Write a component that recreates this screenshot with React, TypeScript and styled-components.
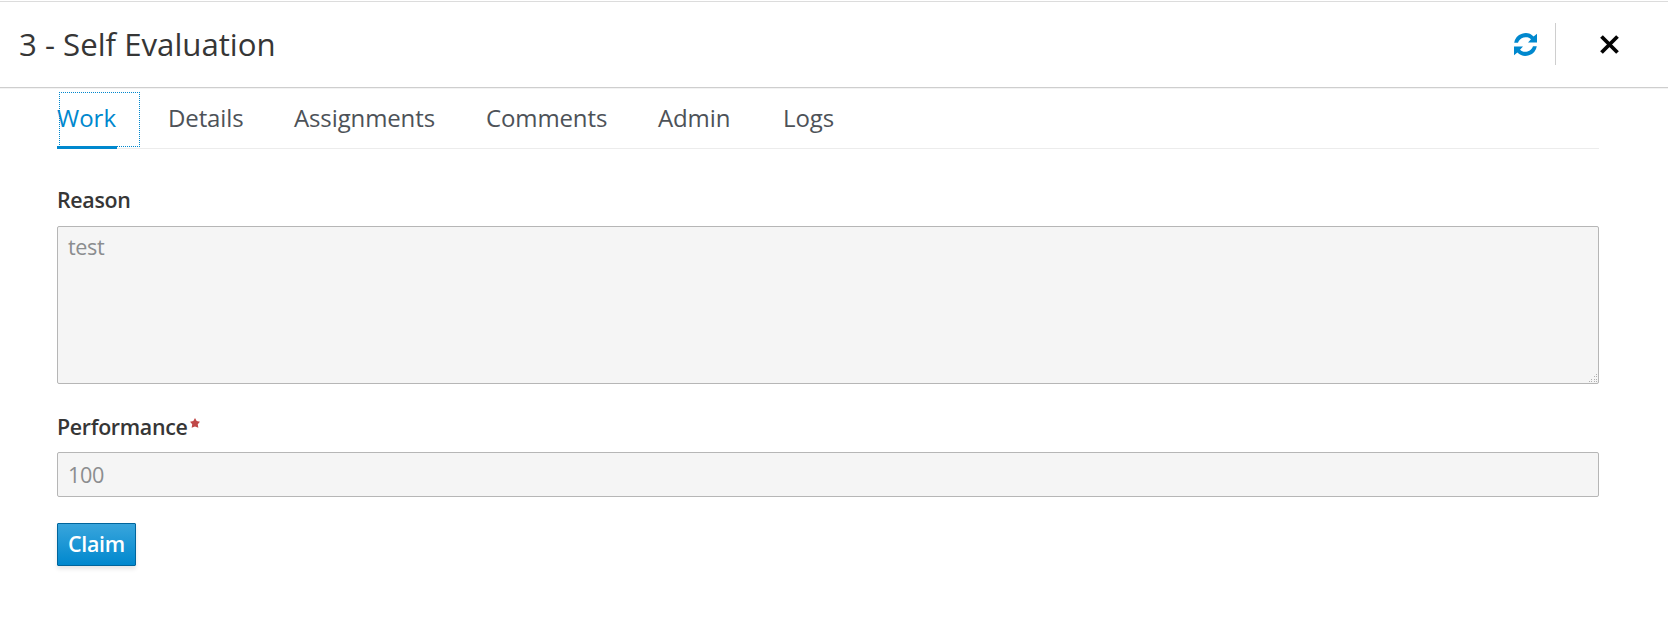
import React from "react";
import styled, { createGlobalStyle } from "styled-components";

const GlobalStyle = createGlobalStyle`
  * { box-sizing: border-box; }
  body {
    margin: 0;
    background: #fff;
    color: #363636;
    font-family: "Open Sans", "Liberation Sans", sans-serif;
  }
`;

const Page = styled.div`
  min-height: 622px;
  padding-top: 1px;
`;

const Header = styled.header`
  display: flex;
  align-items: center;
  height: 87px;
  padding: 0 49px 0 19px;
  border-top: 1px solid #dcdcdc;
  border-bottom: 1px solid #cecece;
  box-shadow: 0 1px 0 #f3f3f3;
`;

const Title = styled.h1`
  flex: 1;
  margin: -2px 0 0;
  font-size: 31.2px;
  line-height: 40px;
  font-weight: 400;
  white-space: nowrap;
`;

const IconButton = styled.button`
  display: flex;
  padding: 0;
  border: 0;
  background: none;
`;

const Divider = styled.span`
  width: 1px;
  height: 42px;
  margin: -2px 44px 0 18px;
  background: #cecece;
`;

const Content = styled.main`
  padding: 3px 69px 0 57px;
`;

const Tabs = styled.nav`
  display: flex;
  height: 58px;
  border-bottom: 1px solid #ececec;
`;

const Tab = styled.a<{ $width: number; $active?: boolean }>`
  position: relative;
  width: ${(p) => p.$width}px;
  font-size: 24px;
  line-height: 54px;
  letter-spacing: ${(p) => (p.$active ? "0" : "-0.12px")};
  color: ${(p) => (p.$active ? "#0088ce" : "#4d5258")};
  white-space: nowrap;
`;

const FocusRing = styled.span`
  position: absolute;
  top: 1px;
  left: 2px;
  width: 81px;
  height: 55px;
  border: 1px dotted #0088ce;
`;

const ActiveBar = styled.span`
  position: absolute;
  left: 0;
  bottom: -1px;
  width: 60px;
  height: 3px;
  background: #0088ce;
`;

const Label = styled.label<{ $top: number }>`
  display: flex;
  margin-top: ${(p) => p.$top}px;
  height: 30px;
  font-size: 21.4px;
  line-height: 30px;
  letter-spacing: -0.33px;
  font-weight: 600;
`;

const Star = styled.svg`
  margin: 6px 0 0 3px;
`;

const TextAreaWrap = styled.div`
  position: relative;
  margin-top: 11px;
`;

const TextArea = styled.textarea`
  display: block;
  width: 100%;
  height: 158px;
  padding: 5px 10px;
  border: 1px solid #b6b6b6;
  border-radius: 2px;
  background: #f5f5f5;
  color: #8b8d8f;
  font: 400 21.6px/30px "Open Sans", "Liberation Sans", sans-serif;
  letter-spacing: -0.4px;
  resize: none;
`;

const Grip = styled.svg`
  position: absolute;
  right: 1px;
  bottom: 1px;
`;

const Input = styled.input`
  display: block;
  width: 100%;
  height: 45px;
  margin-top: 10px;
  padding: 0 10px 1px;
  border: 1px solid #b6b6b6;
  border-radius: 2px;
  background: #f5f5f5;
  color: #8b8d8f;
  font: 400 21.6px/30px "Open Sans", "Liberation Sans", sans-serif;
  letter-spacing: -0.4px;
`;

const ClaimButton = styled.button`
  display: block;
  width: 79px;
  height: 43px;
  margin-top: 26px;
  padding: 0 0 2px;
  border: 1px solid #00659c;
  border-radius: 1px;
  background: linear-gradient(#39a5dc, #0088ce);
  box-shadow: 0 3px 4px rgba(3, 3, 3, 0.1);
  color: #fff;
  font: 600 21.4px/38px "Open Sans", "Liberation Sans", sans-serif;
  letter-spacing: -0.3px;
`;

const tabs = [
  { label: "Work", width: 111 },
  { label: "Details", width: 126 },
  { label: "Assignments", width: 192 },
  { label: "Comments", width: 172 },
  { label: "Admin", width: 125 },
  { label: "Logs", width: 60 },
];

const gripDots = [
  [7, 0],
  [5, 2], [7, 2],
  [2, 5], [5, 5], [7, 5],
  [0, 7], [2, 7], [5, 7], [7, 7],
];

const arrow =
  "M.2 9.800A11.500 11.500 0 0 1 19.600 3.500L23 .8V9.500H14L17 6.200A8 8 0 0 0 4 9.800Z";

export default function App() {
  return (
    <Page>
      <GlobalStyle />
      <Header>
        <Title>3 - Self Evaluation</Title>
        <IconButton aria-label="Refresh">
          <svg width="23" height="23" viewBox="0 0 23 23" fill="#0088ce">
            <path d={arrow} />
            <path d={arrow} transform="rotate(180 11.500 11.500)" />
          </svg>
        </IconButton>
        <Divider />
        <IconButton aria-label="Close">
          <svg width="19" height="19" viewBox="0 0 19 19">
            <path d="M1.500 1.500 17.500 17.500M17.500 1.500 1.500 17.500" stroke="#030303" strokeWidth="3.800" />
          </svg>
        </IconButton>
      </Header>
      <Content>
        <Tabs>
          {tabs.map((t, i) => (
            <Tab key={t.label} $width={t.width} $active={i === 0}>
              {t.label}
              {i === 0 && <FocusRing />}
              {i === 0 && <ActiveBar />}
            </Tab>
          ))}
        </Tabs>
        <Label $top={36}>Reason</Label>
        <TextAreaWrap>
          <TextArea disabled defaultValue="test" />
          <Grip width="10" height="10" viewBox="0 0 10 10">
            {gripDots.map(([x, y]) => (
              <rect key={`${x}-${y}`} x={x + 1} y={y + 1} width="1" height="1" fill="#b0b0b0" />
            ))}
          </Grip>
        </TextAreaWrap>
        <Label $top={28}>
          Performance
          <Star width="10" height="10" viewBox="0 0 9 9.500" preserveAspectRatio="none">
            <path d="M4.500 0 6 2.900 9 3.600 7 6 7.500 9.300 4.500 8 1.500 9.300 2 6 0 3.600 3 2.900Z" fill="#c04848" />
          </Star>
        </Label>
        <Input disabled defaultValue="100" />
        <ClaimButton>Claim</ClaimButton>
      </Content>
    </Page>
  );
}
